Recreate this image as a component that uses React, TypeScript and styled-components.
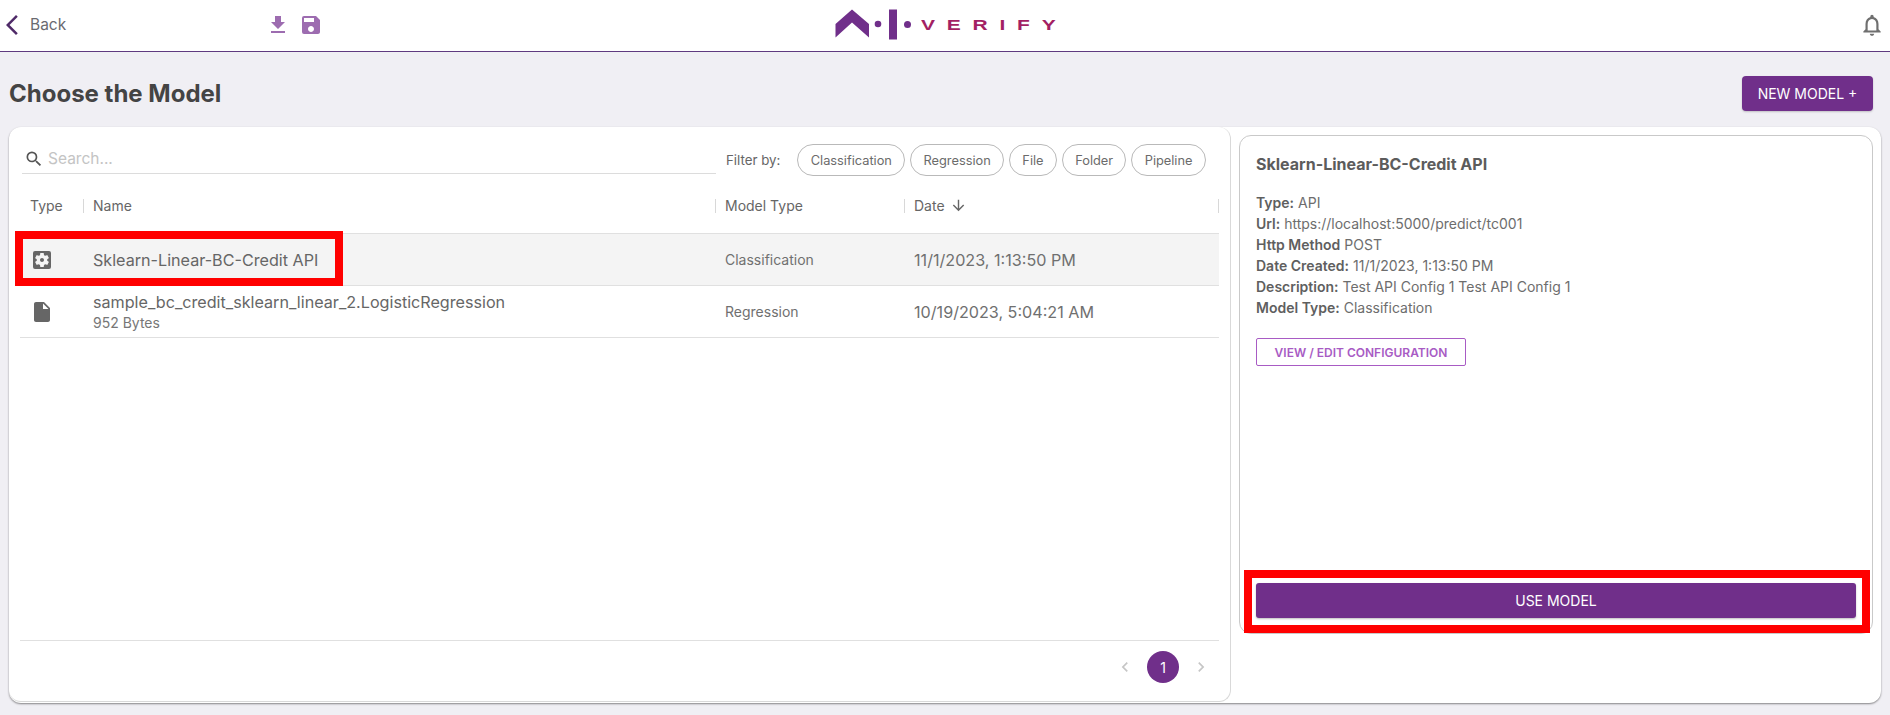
import React from "react";
import styled, { createGlobalStyle } from "styled-components";
import {
  MdArrowBackIosNew,
  MdArrowDownward,
  MdChevronLeft,
  MdChevronRight,
  MdFileDownload,
  MdInsertDriveFile,
  MdNotificationsNone,
  MdSave,
  MdSearch,
  MdSettingsApplications,
} from "react-icons/md";

const filters = ["Classification", "Regression", "File", "Folder", "Pipeline"];

const details = [
  { label: "Type:", value: "API" },
  { label: "Url:", value: "https://localhost:5000/predict/tc001" },
  { label: "Http Method", value: "POST" },
  { label: "Date Created:", value: "11/1/2023, 1:13:50 PM" },
  { label: "Description:", value: "Test API Config 1 Test API Config 1" },
  { label: "Model Type:", value: "Classification" },
];

function App() {
  return (
    <>
      <GlobalStyle />
      <Header>
        <HeaderLeft>
          <BackLink>
            <MdArrowBackIosNew size={24} color="#4f2a68" />
            <span>Back</span>
          </BackLink>
          <HeaderTools>
            <MdFileDownload size={24} />
            <MdSave size={24} />
          </HeaderTools>
        </HeaderLeft>
        <Logo>
          <svg width="65" height="32" viewBox="0 0 65 32">
            <path d="M0.5 15 L17 0.5 L34 15 V28.5 L17 13.5 L0.5 28.5 Z" fill="#702f8a" />
            <circle cx="43" cy="15" r="3.3" fill="#702f8a" />
            <rect x="54" y="0.5" width="8" height="30" fill="#702f8a" />
          </svg>
          <LogoDot />
          <LogoWord>VERIFY</LogoWord>
        </Logo>
        <HeaderRight>
          <MdNotificationsNone size={26} color="#6f6f6f" />
        </HeaderRight>
      </Header>

      <TitleRow>
        <Title>Choose the Model</Title>
        <NewModelButton>NEW MODEL +</NewModelButton>
      </TitleRow>

      <Card>
        <ListPanel>
          <Toolbar>
            <SearchBox>
              <MdSearch size={20} color="#555" />
              <span>Search...</span>
            </SearchBox>
            <FilterLabel>Filter by:</FilterLabel>
            <Chips>
              {filters.map((f) => (
                <Chip key={f}>{f}</Chip>
              ))}
            </Chips>
          </Toolbar>

          <HeadRow>
            <HeadCell>Type</HeadCell>
            <HeadCell $sep>Name</HeadCell>
            <HeadCell $sep>Model Type</HeadCell>
            <HeadCell $sep>
              Date
              <MdArrowDownward size={17} />
            </HeadCell>
            <LastSep />
          </HeadRow>

          <Row $selected>
            <IconCell>
              <MdSettingsApplications size={24} />
            </IconCell>
            <NameCell>
              <Name>Sklearn-Linear-BC-Credit API</Name>
            </NameCell>
            <TypeCell>Classification</TypeCell>
            <DateCell>11/1/2023, 1:13:50 PM</DateCell>
            <RowHighlight />
          </Row>
          <Row>
            <IconCell>
              <MdInsertDriveFile size={24} />
            </IconCell>
            <NameCell>
              <Name>sample_bc_credit_sklearn_linear_2.LogisticRegression</Name>
              <Size>952 Bytes</Size>
            </NameCell>
            <TypeCell>Regression</TypeCell>
            <DateCell>10/19/2023, 5:04:21 AM</DateCell>
          </Row>

          <Pagination>
            <PageArrow>
              <MdChevronLeft size={20} />
            </PageArrow>
            <PageCurrent>1</PageCurrent>
            <PageArrow>
              <MdChevronRight size={20} />
            </PageArrow>
          </Pagination>
        </ListPanel>

        <DetailWrap>
          <DetailPanel>
            <DetailTitle>Sklearn-Linear-BC-Credit API</DetailTitle>
            <DetailList>
              {details.map((d) => (
                <div key={d.label}>
                  <b>{d.label}</b> {d.value}
                </div>
              ))}
            </DetailList>
            <ConfigButton>VIEW / EDIT CONFIGURATION</ConfigButton>
            <UseModelBar>
              <UseModelButton>USE MODEL</UseModelButton>
              <ButtonHighlight />
            </UseModelBar>
          </DetailPanel>
        </DetailWrap>
      </Card>
    </>
  );
}

export default App;

const GlobalStyle = createGlobalStyle`
  html, body {
    margin: 0;
    padding: 0;
    height: 100%;
    background: #f0eff4;
    font-family: Inter, "Liberation Sans", sans-serif;
    color: #5c5c5c;
    overflow: hidden;
  }
  * {
    box-sizing: border-box;
  }
`;

const Header = styled.header`
  display: grid;
  grid-template-columns: 1fr auto 1fr;
  align-items: center;
  height: 52px;
  padding-bottom: 2px;
  background: #fff;
  border-bottom: 1px solid #5f3a80;
`;

const HeaderLeft = styled.div`
  display: flex;
  align-items: center;
`;

const BackLink = styled.div`
  display: flex;
  align-items: center;
  width: 266px;
  gap: 6px;
  font-size: 15.5px;
  color: #6a6a70;
`;

const HeaderTools = styled.div`
  display: flex;
  align-items: center;
  gap: 9px;
  color: #9d6cb0;
`;

const Logo = styled.div`
  display: flex;
  align-items: center;
  gap: 4px;
  height: 32px;
`;

const LogoDot = styled.span`
  width: 7px;
  height: 7px;
  margin-right: 6px;
  border-radius: 50%;
  background: #702f8a;
`;

const LogoWord = styled.span`
  display: inline-block;
  width: 134px;
  font-family: "Liberation Sans", sans-serif;
  font-size: 15px;
  font-weight: 700;
  letter-spacing: 8.4px;
  color: #a31f64;
  white-space: nowrap;
  transform: scaleX(1.4);
  transform-origin: left center;
`;

const HeaderRight = styled.div`
  display: flex;
  justify-content: flex-end;
  padding-right: 5px;
`;

const TitleRow = styled.div`
  display: flex;
  justify-content: space-between;
  align-items: center;
  padding: 24px 17px 16px 9px;
`;

const Title = styled.h1`
  margin: 0;
  font-size: 24px;
  font-weight: 700;
  color: #444;
`;

const NewModelButton = styled.button`
  width: 131px;
  height: 35px;
  border: 0;
  border-radius: 4px;
  background: #702f8a;
  color: #fff;
  font-family: inherit;
  font-size: 14px;
  font-weight: 400;
  box-shadow: 0 1px 2px rgba(0, 0, 0, 0.2);
`;

const Card = styled.main`
  display: grid;
  grid-template-columns: 1222px 1fr;
  height: 576px;
  margin: 0 9px;
  background: #fff;
  border-radius: 12px;
  box-shadow: 0 1px 2px rgba(0, 0, 0, 0.45);
`;

const ListPanel = styled.section`
  display: flex;
  flex-direction: column;
  height: 575px;
  padding: 0 11px;
  border-right: 1px solid #d9d9d9;
  border-bottom: 1px solid #d9d9d9;
  border-radius: 12px;
`;

const Toolbar = styled.div`
  display: flex;
  align-items: center;
  height: 32px;
  margin-top: 17px;
  padding-left: 2px;
`;

const SearchBox = styled.div`
  display: flex;
  align-items: center;
  gap: 4px;
  width: 694px;
  height: 30px;
  margin-bottom: 2px;
  padding-left: 2px;
  border-bottom: 1px solid #dcdcdc;
  font-size: 15.5px;
  color: #c4c4c4;
`;

const FilterLabel = styled.span`
  margin: 0 17px 0 10px;
  font-size: 13.3px;
  color: #666;
`;

const Chips = styled.div`
  display: flex;
  gap: 5px;
`;

const Chip = styled.span`
  height: 32px;
  padding: 0 12.3px;
  display: flex;
  align-items: center;
  border: 1px solid #b9b9b9;
  border-radius: 16px;
  font-size: 12.8px;
  color: #6b6b6b;
`;

const columns = "63px 632px 189px 315px";

const HeadRow = styled.div`
  display: grid;
  grid-template-columns: ${columns};
  position: relative;
  align-items: center;
  height: 58px;
  padding-top: 2px;
  border-bottom: 1px solid #e0e0e0;
`;

const HeadCell = styled.div<{ $sep?: boolean }>`
  display: flex;
  align-items: center;
  gap: 5px;
  height: 14px;
  padding-left: ${(p) => (p.$sep ? 9 : 10)}px;
  border-left: ${(p) => (p.$sep ? "1px solid #d8d8d8" : "0")};
  font-size: 14px;
  font-weight: 400;
  color: #666;
  white-space: nowrap;
`;

const LastSep = styled.span`
  position: absolute;
  right: 0;
  top: 23px;
  height: 14px;
  border-left: 1px solid #d8d8d8;
`;

const Row = styled.div<{ $selected?: boolean }>`
  display: grid;
  grid-template-columns: ${columns};
  position: relative;
  align-items: center;
  height: 52px;
  background: ${(p) => (p.$selected ? "#f4f4f4" : "#fff")};
  border-bottom: 1px solid #e0e0e0;
`;

const IconCell = styled.div`
  display: flex;
  padding-left: 10px;
  color: #666;
`;

const NameCell = styled.div`
  padding-left: 10px;
`;

const Name = styled.div`
  font-size: 16.15px;
  color: #666;
  white-space: nowrap;
`;

const Size = styled.div`
  margin-top: 2px;
  font-size: 14px;
  color: #777;
`;

const TypeCell = styled.div`
  padding-left: 10px;
  font-size: 14px;
  color: #707070;
`;

const DateCell = styled.div`
  padding-left: 10px;
  font-size: 16.15px;
  color: #707070;
`;

const RowHighlight = styled.span`
  position: absolute;
  left: -5px;
  top: -3px;
  bottom: -1px;
  width: 328px;
  border: 8px solid #ff0000;
  pointer-events: none;
`;

const Pagination = styled.div`
  display: flex;
  justify-content: flex-end;
  align-items: center;
  gap: 12px;
  margin-top: auto;
  height: 61px;
  padding: 0 8px 8px 0;
  border-top: 1px solid #e0e0e0;
`;

const PageArrow = styled.span`
  display: flex;
  color: #c6c6c6;
`;

const PageCurrent = styled.span`
  display: flex;
  align-items: center;
  justify-content: center;
  width: 32px;
  height: 32px;
  border-radius: 50%;
  background: #702f8a;
  color: #fff;
  font-size: 14px;
`;

const DetailWrap = styled.div`
  padding: 8px 8px 0;
`;

const DetailPanel = styled.section`
  display: flex;
  flex-direction: column;
  align-items: flex-start;
  height: 499px;
  padding: 18px 16px 15px;
  border: 1px solid #c9c9c9;
  border-radius: 12px;
`;

const DetailTitle = styled.h2`
  margin: 0 0 18px;
  font-size: 16px;
  line-height: 20px;
  font-weight: 700;
  color: #5c5c5c;
`;

const DetailList = styled.div`
  font-size: 14px;
  line-height: 21px;
  color: #6d6d6d;
  b {
    font-weight: 600;
    color: #5f5f5f;
  }
`;

const ConfigButton = styled.button`
  width: 210px;
  height: 28px;
  margin-top: 20px;
  padding: 0;
  border: 1px solid #a85bc4;
  border-radius: 2px;
  background: #fff;
  color: #a85bc4;
  font-family: inherit;
  font-size: 12px;
  font-weight: 600;
`;

const UseModelBar = styled.div`
  position: relative;
  width: 100%;
  margin-top: auto;
`;

const UseModelButton = styled.button`
  display: block;
  width: 100%;
  height: 35px;
  border: 0;
  border-radius: 3px;
  background: #702f8a;
  color: #fff;
  font-family: inherit;
  font-size: 14px;
  font-weight: 400;
  box-shadow: 0 1px 2px rgba(0, 0, 0, 0.25);
`;

const ButtonHighlight = styled.span`
  position: absolute;
  left: -12px;
  right: -14px;
  top: -13px;
  bottom: -15px;
  border: 8px solid #ff0000;
  pointer-events: none;
`;
